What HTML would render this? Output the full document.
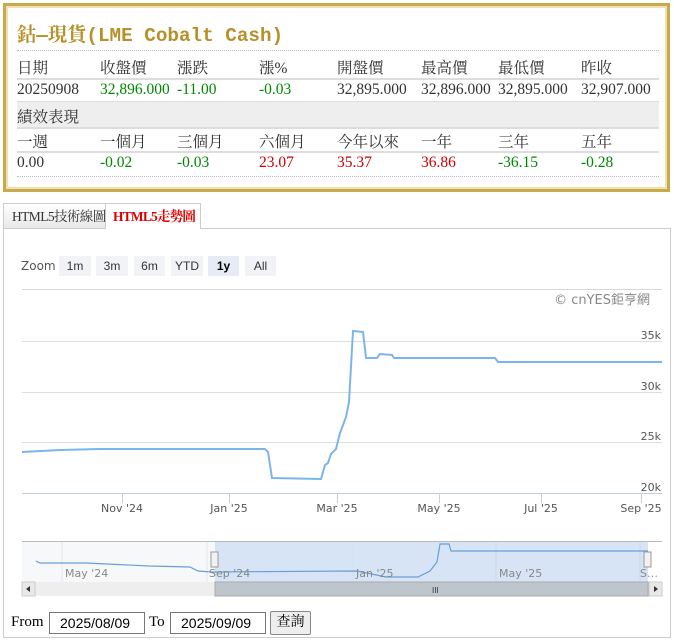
<!DOCTYPE html>
<html><head><meta charset="utf-8"><style>
body{margin:0;background:#fff;font-family:"Liberation Serif","Noto Serif CJK SC","Noto Sans CJK TC",serif;width:674px;height:640px;overflow:hidden;position:relative}
.box{position:absolute;left:3px;top:3px;width:661px;height:183px;border:3px solid #c9a94e;box-shadow:inset 0 0 0 2px #efe2b0}
.t{position:absolute;font-size:15.5px;color:#333;white-space:nowrap}
.g{color:#080}.r{color:#c00}
.hr{position:absolute;left:17px;width:642px}
.tab{position:absolute;top:203px;height:25px;font-size:13.5px;line-height:25px;padding:0 0 0 9px;box-sizing:border-box;white-space:nowrap;overflow:hidden}
.zb{position:absolute;top:256px;height:20px;font:12px "Liberation Sans","DejaVu Sans",sans-serif;line-height:20px;color:#333;background:#f2f3f6;text-align:center}
.ax{font:11px "DejaVu Sans","Liberation Sans",sans-serif;fill:#555}
input{position:absolute;top:612px;height:22px;width:96px;box-sizing:border-box;border:1px solid #777;font:14px "Liberation Sans",sans-serif;padding:0 0 0 10px}
</style></head><body>
<div class="box"></div>
<div class="t" style="left:17px;top:19px;font-size:19.3px;color:#b8902a;font-family:'Liberation Mono','Noto Serif CJK SC',monospace;font-weight:bold">鈷—現貨(LME Cobalt Cash)</div>
<div class="hr" style="top:50px;border-top:1px dotted #bbb"></div>
<div class="t" style="left:17px;top:56px">日期</div><div class="t" style="left:100px;top:56px">收盤價</div><div class="t" style="left:177px;top:56px">漲跌</div><div class="t" style="left:259px;top:56px">漲%</div><div class="t" style="left:337px;top:56px">開盤價</div><div class="t" style="left:421px;top:56px">最高價</div><div class="t" style="left:498px;top:56px">最低價</div><div class="t" style="left:581px;top:56px">昨收</div>
<div class="hr" style="top:78px;border-top:2px solid #ddd"></div>
<div class="t" style="left:17px;top:81px">20250908</div><div class="t g" style="left:100px;top:81px">32,896.000</div><div class="t g" style="left:177px;top:81px">-11.00</div><div class="t g" style="left:259px;top:81px">-0.03</div><div class="t" style="left:337px;top:81px">32,895.000</div><div class="t" style="left:421px;top:81px">32,896.000</div><div class="t" style="left:498px;top:81px">32,895.000</div><div class="t" style="left:581px;top:81px">32,907.000</div>
<div class="hr" style="top:101px;height:25px;background:#eee;border-top:1px solid #ddd;border-bottom:2px solid #ddd"></div>
<div class="t" style="left:17px;top:105px">績效表現</div>
<div class="t" style="left:17px;top:130px">一週</div><div class="t" style="left:100px;top:130px">一個月</div><div class="t" style="left:177px;top:130px">三個月</div><div class="t" style="left:259px;top:130px">六個月</div><div class="t" style="left:337px;top:130px">今年以來</div><div class="t" style="left:421px;top:130px">一年</div><div class="t" style="left:498px;top:130px">三年</div><div class="t" style="left:581px;top:130px">五年</div>
<div class="hr" style="top:151px;border-top:2px solid #ddd"></div>
<div class="t" style="left:17px;top:154px">0.00</div><div class="t g" style="left:100px;top:154px">-0.02</div><div class="t g" style="left:177px;top:154px">-0.03</div><div class="t r" style="left:259px;top:154px">23.07</div><div class="t r" style="left:337px;top:154px">35.37</div><div class="t r" style="left:421px;top:154px">36.86</div><div class="t g" style="left:498px;top:154px">-36.15</div><div class="t g" style="left:581px;top:154px">-0.28</div>
<div class="hr" style="top:176px;border-top:1px dotted #bbb"></div>

<div style="position:absolute;left:3px;top:228px;width:668px;height:410px;border:1px solid #ccc;box-sizing:border-box"></div>
<div class="tab" style="left:3px;width:103px;border:1px solid #ccc;border-bottom:none;background:linear-gradient(#fff,#e8e8e8);color:#333;padding-left:8px;letter-spacing:-0.6px">HTML5技術線圖</div>
<div class="tab" style="left:105px;width:96px;height:26px;border:1px solid #ccc;border-bottom:none;background:#fff;color:#d00;font-weight:bold;padding-left:7px;letter-spacing:-0.8px">HTML5走勢圖</div>

<div style="position:absolute;left:21px;top:259px;font:12px 'DejaVu Sans',sans-serif;color:#555">Zoom</div>
<div class="zb" style="left:59px;width:32px">1m</div><div class="zb" style="left:96px;width:32px">3m</div><div class="zb" style="left:134px;width:31px">6m</div><div class="zb" style="left:171px;width:32px">YTD</div><div class="zb" style="left:208px;width:31px;background:#e6ebf5;font-weight:bold;color:#000">1y</div><div class="zb" style="left:245px;width:31px">All</div>

<svg style="position:absolute;left:0;top:0" width="674" height="640">
<line x1="22" y1="289.5" x2="662" y2="289.5" stroke="#d8d8d8"/>
<text x="650" y="304" text-anchor="end" style="font:13px 'DejaVu Sans','WenQuanYi Zen Hei',sans-serif;fill:#888">© cnYES鉅亨網</text>
<g stroke="#ddd"><line x1="22" y1="341.5" x2="662" y2="341.5"/><line x1="22" y1="392.5" x2="662" y2="392.5"/><line x1="22" y1="442.5" x2="662" y2="442.5"/></g>
<line x1="22" y1="493.5" x2="662" y2="493.5" stroke="#c0d0e0"/>
<g class="ax" text-anchor="end"><text x="661" y="339">35k</text><text x="661" y="390">30k</text><text x="661" y="440">25k</text><text x="661" y="491">20k</text></g>
<g stroke="#c0d0e0"><line x1="122.5" y1="494" x2="122.5" y2="503"/><line x1="229.5" y1="494" x2="229.5" y2="503"/><line x1="337.5" y1="494" x2="337.5" y2="503"/><line x1="439.5" y1="494" x2="439.5" y2="503"/><line x1="541.5" y1="494" x2="541.5" y2="503"/><line x1="641.5" y1="494" x2="641.5" y2="503"/></g>
<g class="ax" text-anchor="middle"><text x="122" y="512">Nov '24</text><text x="229" y="512">Jan '25</text><text x="337" y="512">Mar '25</text><text x="439" y="512">May '25</text><text x="541" y="512">Jul '25</text><text x="641" y="512">Sep '25</text></g>
<polyline fill="none" stroke="#7cb5ec" stroke-width="2" points="22,452 60,450 100,449 180,449 265,449 268,452 272,478 321,479 325,465 328,463 331,454 336,449 340,433 346,417 349,402 353,331 363,332 366,358 377,358 380,354 392,355 394,358 495,358 498,362 662,362"/>
<line x1="22" y1="541.5" x2="662" y2="541.5" stroke="#bbb"/>
<rect x="22" y="542" width="193" height="40" fill="#f7f8fa"/>
<rect x="215" y="542" width="433" height="40" fill="#d6e4f5"/>
<g stroke="#e0e6ee"><line x1="62" y1="542" x2="62" y2="582"/><line x1="207" y1="542" x2="207" y2="582"/><line x1="353" y1="542" x2="353" y2="582" stroke="#c8d8ea" stroke-dasharray="1 2"/><line x1="496" y1="542" x2="496" y2="582" stroke="#c8d8ea"/><line x1="640" y1="542" x2="640" y2="582" stroke="#c8d8ea"/></g>
<polyline fill="none" stroke="#6a9fd6" stroke-width="1.2" points="36,561 40,563 86,563 149,566 190,567 198,571 211,572 357,571 386,577 418,577 430,571 437,562 440,544 449,544 451,551 539,551 648,551"/>
<g class="ax" style="fill:#888"><text x="65" y="577">May '24</text><text x="209" y="577">Sep '24</text><text x="356" y="577">Jan '25</text><text x="499" y="577">May '25</text><text x="640" y="577">S…</text></g>
<rect x="211" y="552" width="7" height="15" fill="#f2f2f2" stroke="#999"/><rect x="644" y="552" width="7" height="15" fill="#f2f2f2" stroke="#999"/>
<rect x="22" y="582" width="640" height="14" fill="#eeeeee"/>
<rect x="215" y="582" width="433" height="14" fill="#bfc5cc" stroke="#aaa"/>
<text x="432" y="593" style="font:8px sans-serif;fill:#333">III</text>
<rect x="22" y="582" width="13" height="14" fill="#e8e8e8" stroke="#ccc"/><path d="M30,586 L26,589 L30,592Z" fill="#333"/>
<rect x="649" y="582" width="13" height="14" fill="#e8e8e8" stroke="#ccc"/><path d="M654,586 L658,589 L654,592Z" fill="#333"/>
</svg>
<div style="position:absolute;left:11px;top:614px;font-size:15px">From</div>
<input style="left:49px" value="2025/08/09">
<div style="position:absolute;left:149px;top:614px;font-size:15px">To</div>
<input style="left:170px" value="2025/09/09">
<div style="position:absolute;left:270px;top:611px;width:41px;height:24px;box-sizing:border-box;border:1px solid #888;border-radius:2px;background:#eee;font-size:14px;text-align:center;line-height:22px">查詢</div>
</body></html>
